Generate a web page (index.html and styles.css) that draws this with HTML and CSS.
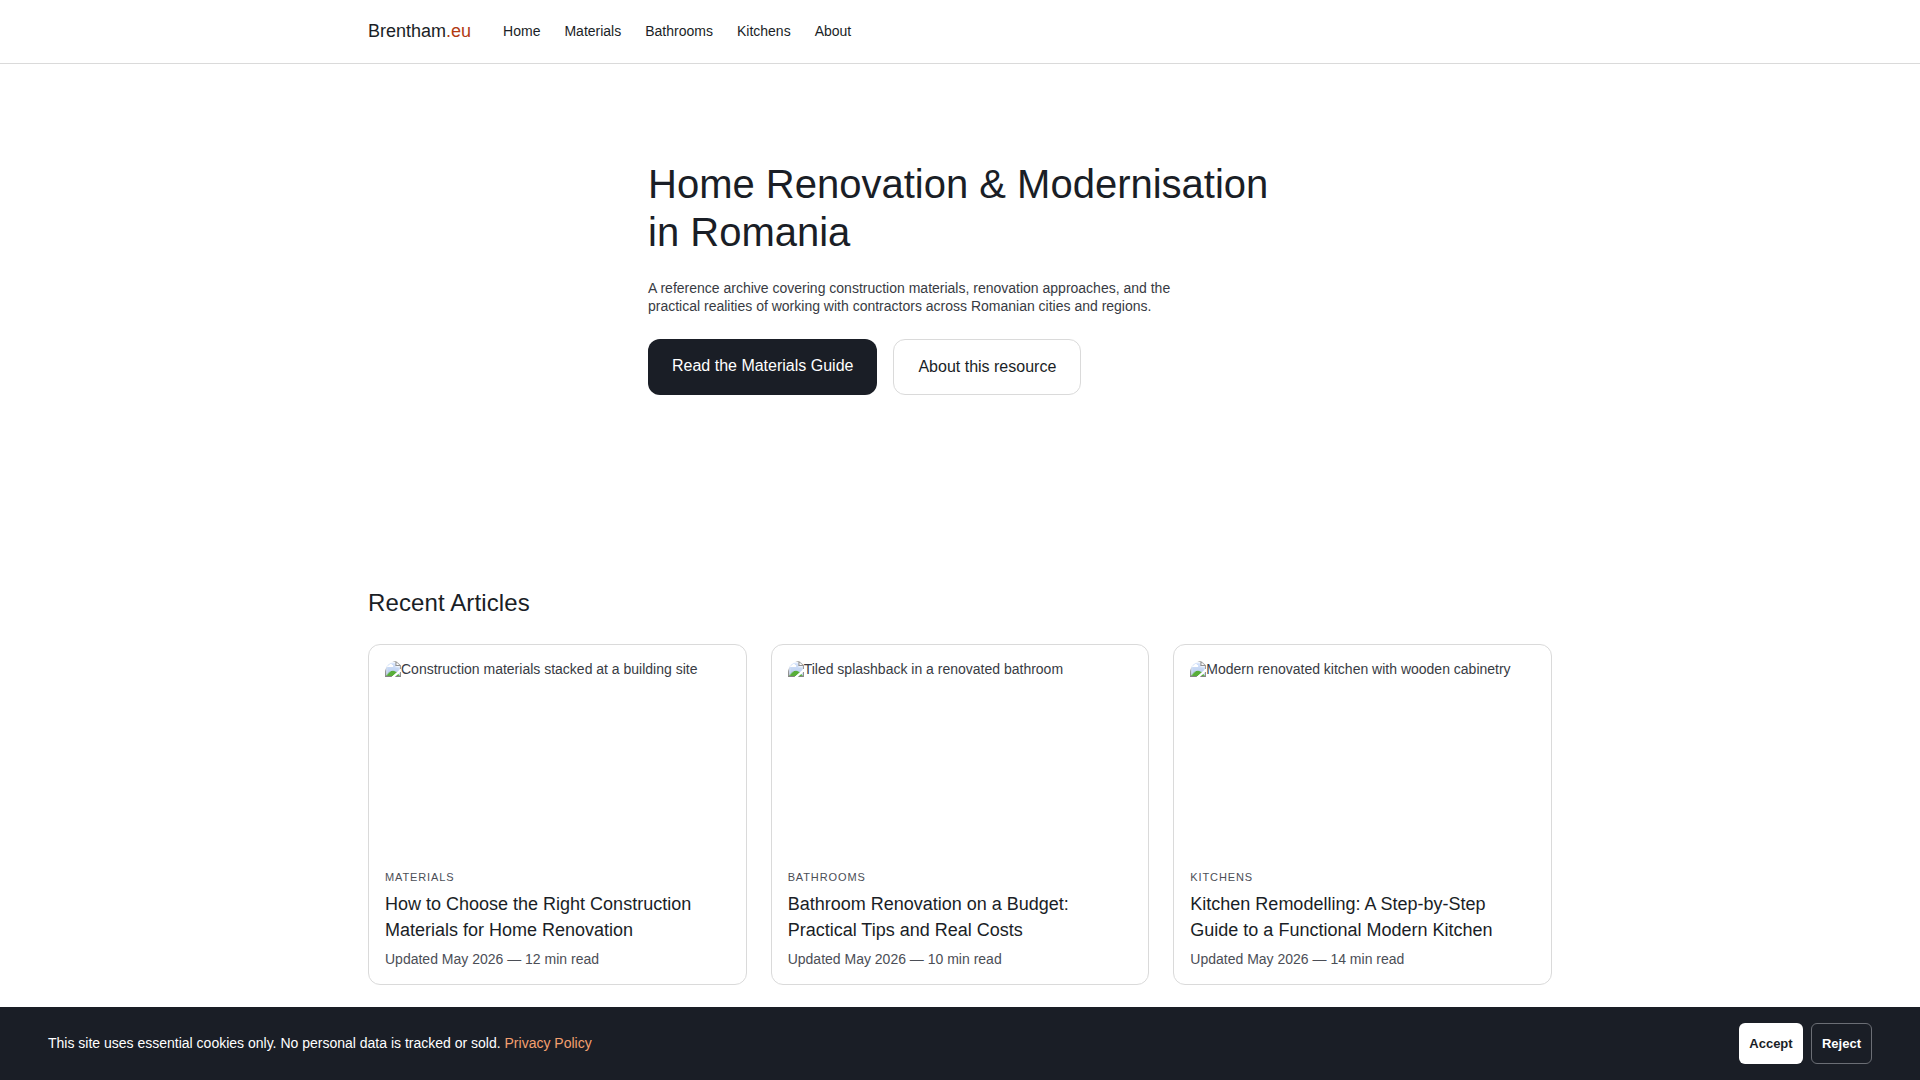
FILE: index.html
```html
<!DOCTYPE html>
<html lang="en">
<head>
<meta charset="utf-8">
<title>Brentham.eu</title>
<link rel="stylesheet" href="styles.css">
</head>
<body>
<header class="site-header">
  <div class="header-inner">
    <a class="logo">Brentham<span>.eu</span></a>
    <nav class="nav"><a>Home</a><a>Materials</a><a>Bathrooms</a><a>Kitchens</a><a>About</a></nav>
  </div>
</header>
<main>
  <section class="hero">
    <h1>Home Renovation &amp; Modernisation in Romania</h1>
    <p>A reference archive covering construction materials, renovation approaches, and the practical realities of working with contractors across Romanian cities and regions.</p>
    <div class="actions"><a class="btn primary">Read the Materials Guide</a><a class="btn outline">About this resource</a></div>
  </section>
  <section class="articles">
    <h2>Recent Articles</h2>
    <div class="grid">
      <article class="card">
        <img class="thumb" src="construction.jpg" alt="Construction materials stacked at a building site">
        <span class="tag">Materials</span>
        <h3>How to Choose the Right Construction Materials for Home Renovation</h3>
        <p class="meta">Updated May 2026 — 12 min read</p>
      </article>
      <article class="card">
        <img class="thumb" src="bathroom.jpg" alt="Tiled splashback in a renovated bathroom">
        <span class="tag">Bathrooms</span>
        <h3>Bathroom Renovation on a Budget: Practical Tips and Real Costs</h3>
        <p class="meta">Updated May 2026 — 10 min read</p>
      </article>
      <article class="card">
        <img class="thumb" src="kitchen.jpg" alt="Modern renovated kitchen with wooden cabinetry">
        <span class="tag">Kitchens</span>
        <h3>Kitchen Remodelling: A Step-by-Step Guide to a Functional Modern Kitchen</h3>
        <p class="meta">Updated May 2026 — 14 min read</p>
      </article>
    </div>
  </section>
</main>
<div class="cookie-bar">
  <p>This site uses essential cookies only. No personal data is tracked or sold. <a>Privacy Policy</a></p>
  <div class="cookie-actions"><button class="accept">Accept</button><button class="reject">Reject</button></div>
</div>
</body>
</html>
```
FILE: styles.css
```css
* { box-sizing: border-box; margin: 0; padding: 0; }
body {
  height: 1080px;
  overflow: hidden;
  display: flex;
  flex-direction: column;
  background: #fff;
  color: #383b43;
  font: 14px/17.5px "Liberation Sans", Arial, sans-serif;
}
main { flex: 1; min-height: 0; }
.site-header { height: 64px; border-bottom: 1px solid #dadada; }
.header-inner { width: 1184px; height: 62px; margin: 0 auto; display: flex; align-items: center; gap: 32px; color: #1a1e26; }
.logo { font-size: 18px; line-height: 22px; }
.logo span { color: #b23a12; }
.nav { display: flex; gap: 24px; padding-bottom: 1px; line-height: 18px; }
.hero { width: 624px; margin: 0 auto; padding-top: 96px; height: 496px; }
h1, h2, h3 { font-weight: 400; color: #1a1e26; }
h1 { font-size: 40px; line-height: 48px; margin-bottom: 24px; }
.hero p { width: 560px; margin-bottom: 24px; }
.actions { display: flex; gap: 16px; }
.btn { height: 56px; padding: 16px 24px; border-radius: 12px; font-size: 16px; line-height: 21px; color: #1a1e26; }
.primary { background: #1a1e26; color: #fff; }
.outline { border: 1px solid #dadada; }
.articles { width: 1184px; margin: 0 auto; padding-top: 28px; }
h2 { font-size: 24px; line-height: 30px; letter-spacing: 0.12px; margin-bottom: 26px; }
.grid { display: grid; grid-template-columns: repeat(3, 1fr); gap: 24px; }
.card { display: flex; flex-direction: column; height: 341px; padding: 16px; border: 1px solid #dadada; border-radius: 12px; }
.thumb { width: 100%; height: 200px; border-radius: 12px; }
.tag { margin-top: 9px; font-size: 11px; line-height: 14px; letter-spacing: 0.88px; text-transform: uppercase; color: #4b4e56; }
h3 { margin-top: 7px; font-size: 18px; line-height: 26px; }
.meta { margin-top: 8px; color: #4b4e56; }
.cookie-bar { height: 73px; padding: 0 48px; display: flex; align-items: center; justify-content: space-between; background: #1a1e26; color: #fff; }
.cookie-bar p { padding-bottom: 2px; line-height: 18px; }
.cookie-bar a { color: #f4a070; }
.cookie-actions { display: flex; gap: 8px; }
button { height: 41px; padding: 0 10px; border: 0; border-radius: 6px; background: #fff; color: #1a1e26; font: bold 13px "Liberation Sans", Arial, sans-serif; }
.accept { width: 64px; }
.reject { background: transparent; border: 1px solid #6b6e75; color: #fff; }
```
